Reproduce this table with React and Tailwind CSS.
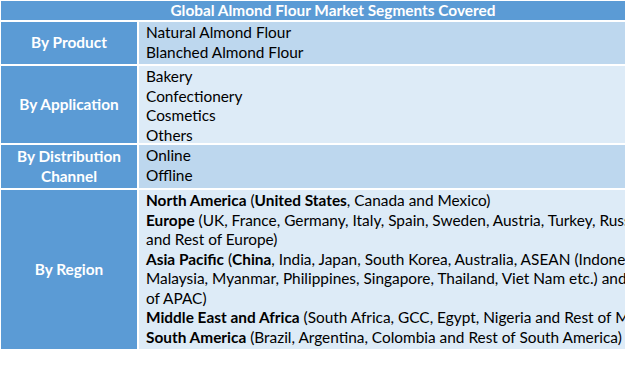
import React from 'react';

const Label = ({ children }) => (
  <div className="bg-[#5b9bd5] flex items-center justify-center text-center text-white font-bold leading-[19.5px]">
    {children}
  </div>
);

const Cell = ({ tone, children }) => (
  <div className={`${tone} pl-[7px] pt-[1px] leading-[19.5px] whitespace-nowrap overflow-hidden text-black`}>
    {children}
  </div>
);

const regions = [
  [<b key="a">North America</b>, ' (', <b key="b">United States</b>, ', Canada and Mexico)'],
  [<b key="a">Europe</b>, ' (UK, France, Germany, Italy, Spain, Sweden, Austria, Turkey, Russia'],
  ['and Rest of Europe)'],
  [<b key="a">Asia Pacific</b>, ' (', <b key="b">China</b>, ', India, Japan, South Korea, Australia, ASEAN (Indonesia,'],
  ['Malaysia, Myanmar, Philippines, Singapore, Thailand, Viet Nam etc.) and Rest'],
  ['of APAC)'],
  [<b key="a">Middle East and Africa</b>, ' (South Africa, GCC, Egypt, Nigeria and Rest of MEA)'],
  [<b key="a">South America</b>, ' (Brazil, Argentina, Colombia and Rest of South America)'],
];

export default function App() {
  return (
    <div className="w-[625px] h-[385px] bg-white overflow-hidden pt-[1px] pl-[1px] text-[15.4px]" style={{ fontFamily: 'Lato, "Open Sans", sans-serif' }}>
      <div className="w-[664px] grid grid-cols-[136px_1fr] grid-rows-[19px_42px_77px_43px_159px] gap-[2px] bg-white">
        <div className="col-span-2 bg-[#5b9bd5] text-white font-bold text-center leading-[19px]">
          Global Almond Flour Market Segments Covered
        </div>

        <Label>By Product</Label>
        <Cell tone="bg-[#bdd7ee]">
          <div>Natural Almond Flour</div>
          <div>Blanched Almond Flour</div>
        </Cell>

        <Label>By Application</Label>
        <Cell tone="bg-[#ddebf7]">
          <div>Bakery</div>
          <div>Confectionery</div>
          <div>Cosmetics</div>
          <div>Others</div>
        </Cell>

        <Label>By Distribution<br />Channel</Label>
        <Cell tone="bg-[#bdd7ee]">
          <div>Online</div>
          <div>Offline</div>
        </Cell>

        <Label>By Region</Label>
        <Cell tone="bg-[#ddebf7]">
          {regions.map((line, i) => (
            <div key={i}>{line}</div>
          ))}
        </Cell>
      </div>
    </div>
  );
}
